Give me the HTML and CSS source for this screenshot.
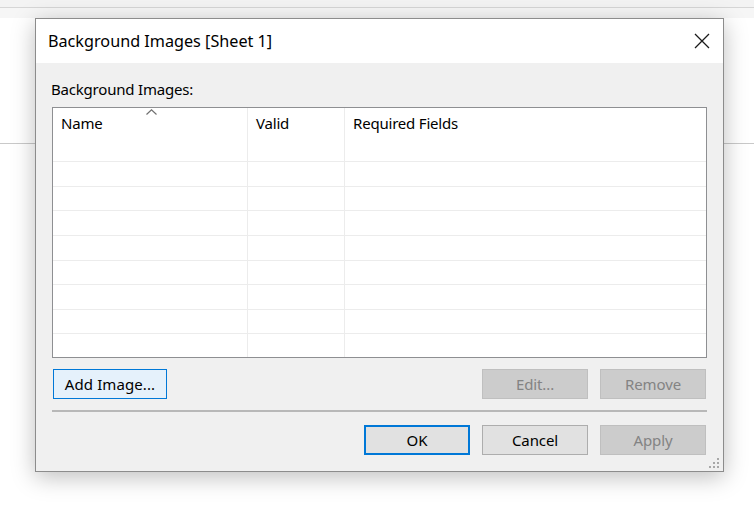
FILE: index.html
```html
<!DOCTYPE html>
<html>
<head>
<meta charset="utf-8">
<link rel="stylesheet" href="styles.css">
</head>
<body>
<div class="app">
  <div class="app-top"></div>
  <div class="app-strip"></div>
  <div class="app-area"></div>
  <div class="app-lower"></div>
</div>

<div class="dialog">
  <div class="titlebar">
    <span class="title">Background Images [Sheet 1]</span>
    <svg class="close" width="16" height="16" viewBox="0 0 16 16"><path d="M1 1 L15 15 M15 1 L1 15" stroke="#1a1a1a" stroke-width="1.3" fill="none"/></svg>
  </div>
  <div class="body">
    <div class="label">Background Images:</div>
    <div class="table">
      <div class="row head">
        <div class="cell c1">Name<svg class="sort" width="11" height="6" viewBox="0 0 11 6"><path d="M0.5 5.5 L5.5 0.8 L10.5 5.5" stroke="#707070" stroke-width="1.2" fill="none"/></svg></div>
        <div class="cell c2">Valid</div>
        <div class="cell c3">Required Fields</div>
      </div>
      <div class="row"><div class="cell c1"></div><div class="cell c2"></div><div class="cell c3"></div></div>
      <div class="row"><div class="cell c1"></div><div class="cell c2"></div><div class="cell c3"></div></div>
      <div class="row"><div class="cell c1"></div><div class="cell c2"></div><div class="cell c3"></div></div>
      <div class="row"><div class="cell c1"></div><div class="cell c2"></div><div class="cell c3"></div></div>
      <div class="row"><div class="cell c1"></div><div class="cell c2"></div><div class="cell c3"></div></div>
      <div class="row"><div class="cell c1"></div><div class="cell c2"></div><div class="cell c3"></div></div>
      <div class="row"><div class="cell c1"></div><div class="cell c2"></div><div class="cell c3"></div></div>
      <div class="row last"><div class="cell c1"></div><div class="cell c2"></div><div class="cell c3"></div></div>
    </div>
    <div class="actions">
      <button class="btn focus add">Add Image...</button>
      <span class="spacer"></span>
      <button class="btn disabled">Edit...</button>
      <button class="btn disabled">Remove</button>
    </div>
    <div class="sep"></div>
    <div class="footer">
      <button class="btn default">OK</button>
      <button class="btn">Cancel</button>
      <button class="btn disabled">Apply</button>
    </div>
    <svg class="grip" width="11" height="11" viewBox="0 0 11 11">
      <rect x="8" y="0" width="2" height="2" fill="#a8a8a8"/>
      <rect x="4" y="4" width="2" height="2" fill="#a8a8a8"/>
      <rect x="8" y="4" width="2" height="2" fill="#a8a8a8"/>
      <rect x="0" y="8" width="2" height="2" fill="#a8a8a8"/>
      <rect x="4" y="8" width="2" height="2" fill="#a8a8a8"/>
      <rect x="8" y="8" width="2" height="2" fill="#a8a8a8"/>
    </svg>
  </div>
</div>
</body>
</html>
```

FILE: styles.css
```css
html, body {
  margin: 0;
  padding: 0;
}
body {
  width: 754px;
  height: 510px;
  background: #ffffff;
  font-family: "Noto Sans", "Open Sans", "Liberation Sans", sans-serif;
  color: #000;
  overflow: hidden;
  position: relative;
}
.app-top {
  height: 7px;
  background: #f3f3f3;
  border-bottom: 1px solid #d6d6d6;
}
.app-strip {
  height: 10px;
  background: #f6f6f6;
}
.app-area {
  height: 125px;
  background: #ffffff;
  border-bottom: 1px solid #c9c9c9;
}
.app-lower {
  height: 366px;
  background: #ffffff;
}

.dialog {
  position: absolute;
  left: 35px;
  top: 18px;
  width: 687px;
  height: 452px;
  border: 1px solid #8c8c8c;
  box-shadow: 0 5px 22px rgba(0, 0, 0, 0.26);
  display: flex;
  flex-direction: column;
  background: #f0f0f0;
}
.titlebar {
  height: 44px;
  background: #ffffff;
  display: flex;
  align-items: center;
  justify-content: space-between;
  padding: 0 13px 0 12px;
  flex: none;
}
.title {
  font-size: 16.2px;
  letter-spacing: 0;
}
.close {
  display: block;
}
.body {
  flex: 1;
  position: relative;
  padding: 0 16px;
  display: flex;
  flex-direction: column;
}
.label {
  margin-top: 17px;
  height: 18px;
  line-height: 18px;
  font-size: 15px;
  margin-left: -1px;
  letter-spacing: -0.2px;
}
.table {
  margin-top: 9px;
  height: 251px;
  box-sizing: border-box;
  border: 1px solid #8e8f92;
  background: #ffffff;
  overflow: hidden;
}
.row {
  display: grid;
  grid-template-columns: 195px 97px 1fr;
  height: 24.65px;
  box-sizing: border-box;
  border-bottom: 1px solid #ececec;
}
.row.head {
  height: 54px;
}
.row.last {
  border-bottom: none;
}
.cell {
  border-right: 1px solid #ececec;
  padding-left: 8px;
  font-size: 15px;
  letter-spacing: -0.2px;
  line-height: 18px;
  position: relative;
}
.row.head .cell {
  padding-top: 6px;
}
.cell.c3 {
  border-right: none;
}
.sort {
  position: absolute;
  left: 93px;
  top: 1px;
}
.actions {
  margin-top: 11px;
  display: flex;
  gap: 12px;
  padding-left: 1px;
  padding-right: 1px;
}
.spacer {
  flex: 1;
}
.btn {
  font-family: inherit;
  font-size: 15px;
  letter-spacing: -0.1px;
  width: 106px;
  height: 30px;
  box-sizing: border-box;
  border: 1px solid #adadad;
  background: #e1e1e1;
  color: #000;
  padding: 0;
  margin: 0;
}
.btn.add {
  width: 114px;
  border: 1px solid #0078d7;
  background: #e5f1fb;
  letter-spacing: 0.1px;
}
.btn.disabled {
  background: #cccccc;
  border-color: #bfbfbf;
  color: #838383;
}
.btn.default {
  border: 2px solid #0078d7;
}
.sep {
  margin-top: 11px;
  height: 0;
  border-top: 2px solid #a0a0a0;
  border-bottom: 0;
  opacity: 0.7;
}
.footer {
  margin-top: 13px;
  display: flex;
  justify-content: flex-end;
  gap: 12px;
  padding-right: 1px;
}
.grip {
  position: absolute;
  right: 3px;
  bottom: 2px;
}
```
